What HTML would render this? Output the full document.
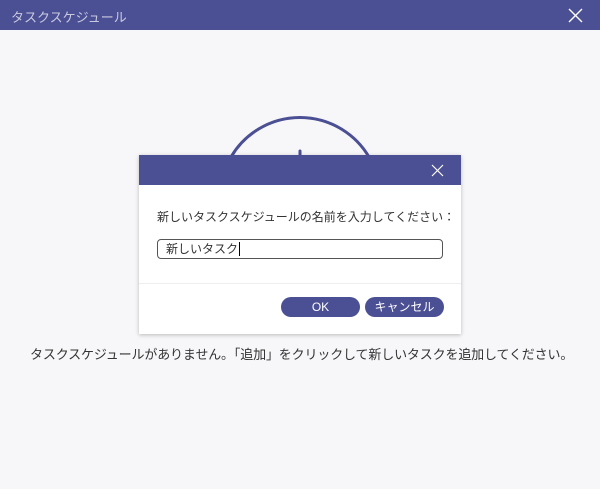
<html><head><style>
body{margin:0;width:600px;height:489px;background:#f7f7f9;font-family:"Liberation Sans","Noto Sans CJK JP",sans-serif;position:relative;overflow:hidden}
.tb{position:absolute;left:0;top:0;width:600px;height:30px;background:#4b4f93}
.t{position:absolute;left:11px;top:7px;color:#c9cae0;font-size:13px}
.dlg{position:absolute;left:139px;top:155px;width:322px;height:179px;background:#fff;box-shadow:0 1px 4px rgba(0,0,0,.25)}
.dh{height:30px;background:#4b4f93;position:relative}
.btn{position:absolute;top:142px;height:20px;width:79px;border-radius:10px;background:#4b4f93;color:#fff;font-size:12px;text-align:center;line-height:20px}
</style></head><body>
<div class="tb"><div class="t">タスクスケジュール</div>
<svg style="position:absolute;left:568px;top:8px" width="15" height="15"><path d="M1 1L14 14M14 1L1 14" stroke="#fff" stroke-width="1.4"/></svg></div>
<svg style="position:absolute;left:0;top:0" width="600" height="489"><path d="M231 157A80 80 0 0 1 369 157" fill="none" stroke="#4b4f93" stroke-width="3"/><line x1="300" y1="151" x2="300" y2="156" stroke="#4b4f93" stroke-width="3" stroke-linecap="round"/></svg>
<div class="dlg"><div class="dh"><svg style="position:absolute;left:292px;top:9px" width="13" height="13"><path d="M1 1L12 12M12 1L1 12" stroke="#fff" stroke-width="1.2"/></svg></div>
<div style="position:absolute;left:18px;top:53px;font-size:12px;color:#333;white-space:nowrap">新しいタスクスケジュールの名前を入力してください：</div>
<div style="position:absolute;left:18px;top:84px;height:18px;border:1px solid #555;border-radius:4px;font-size:12px;line-height:18px;color:#333;padding-left:8px;width:276px">新しいタスク<span style="border-left:1px solid #000;margin-left:1px"></span></div>
<div style="position:absolute;left:0;top:128px;width:322px;border-top:1px solid #eee"></div>
<div class="btn" style="left:142px">OK</div><div class="btn" style="left:226px">キャンセル</div>
</div>
<div style="position:absolute;left:30px;top:344px;font-size:13px;color:#333;white-space:nowrap;letter-spacing:-0.15px">タスクスケジュールがありません。「追加」をクリックして新しいタスクを追加してください。</div>
</body></html>
